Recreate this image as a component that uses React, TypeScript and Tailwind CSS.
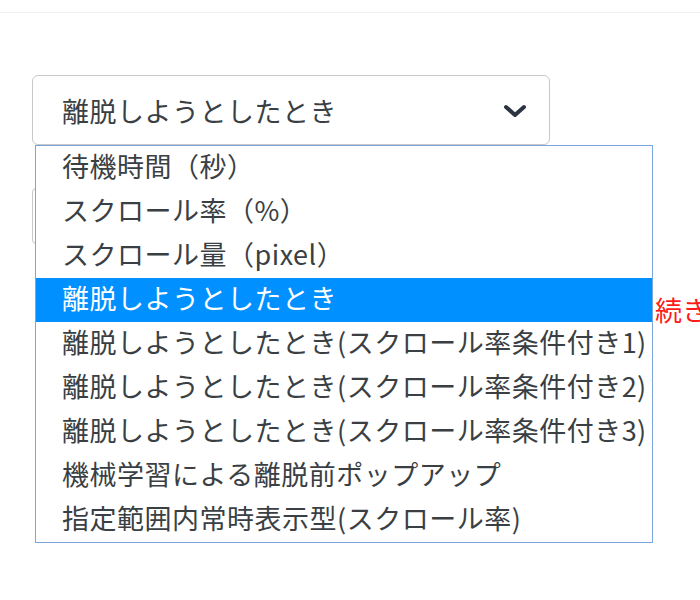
import React from "react";

const items = [
  "待機時間（秒）",
  "スクロール率（%）",
  "スクロール量（pixel）",
  "離脱しようとしたとき",
  "離脱しようとしたとき(スクロール率条件付き1)",
  "離脱しようとしたとき(スクロール率条件付き2)",
  "離脱しようとしたとき(スクロール率条件付き3)",
  "機械学習による離脱前ポップアップ",
  "指定範囲内常時表示型(スクロール率)",
];

export default function App() {
  return (
    <div
      className="w-[700px] h-[600px] bg-white overflow-hidden relative"
      style={{ fontFamily: '"Noto Sans CJK JP", "Noto Sans", sans-serif' }}
    >
      <div className="h-[13px] border-b border-[#eef3f3]" />
      <div className="pl-[32px] pt-[62px]">
        <div className="relative w-[518px]">
          <div className="h-[70px] border border-[#c8c8c8] rounded-[6px] flex items-center justify-between pl-[29px] pr-[22px] text-[27px] tracking-[0.5px] text-[#3a3f44]">
            <span className="leading-none">離脱しようとしたとき</span>
            <svg width="24" height="14" viewBox="0 0 24 14" className="mt-[2px]">
              <path d="M3 3 L12 11 L21 3" fill="none" stroke="#2b3440" strokeWidth="4" strokeLinecap="round" strokeLinejoin="round" />
            </svg>
          </div>
          <div className="mt-[43px] h-[56px] border border-[#c8c8c8] rounded-[4px]" />
          <div className="mt-[52px] flex">
            <span className="ml-[623px] text-[27px] leading-none text-[#ff1a1a] whitespace-nowrap">続き</span>
          </div>
          <div className="absolute left-[3px] top-[70px] w-[618px] h-[398px] border border-[#7ea4dc] bg-white flex flex-col">
            {items.map((t, i) => (
              <div
                key={i}
                className={
                  i === 3
                    ? "h-[44px] shrink-0 flex items-center pl-[26px] pb-[5px] text-[27px] tracking-[0.5px] leading-none whitespace-nowrap bg-[#0090ff] text-white"
                    : "h-[44px] shrink-0 flex items-center pl-[26px] pb-[5px] text-[27px] tracking-[0.5px] leading-none whitespace-nowrap text-[#3a3f44]"
                }
              >
                {t}
              </div>
            ))}
          </div>
        </div>
      </div>
    </div>
  );
}
